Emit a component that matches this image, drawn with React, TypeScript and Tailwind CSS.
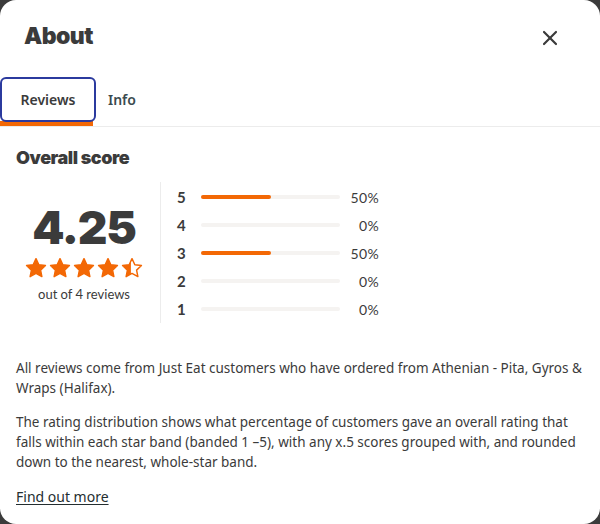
import { X } from "lucide-react";

const ratings = [
  { stars: 5, pct: 50 },
  { stars: 4, pct: 0 },
  { stars: 3, pct: 50 },
  { stars: 2, pct: 0 },
  { stars: 1, pct: 0 },
];

function Star({ fill = 1 }: { fill?: number }) {
  const id = `clip-${Math.round(fill * 100)}`;
  const d = "M12 1.8l3.1 6.6 7.2.9-5.3 5 1.4 7.1L12 17.9l-6.4 3.5 1.4-7.1-5.3-5 7.2-.9z";
  return (
    <svg viewBox="0 0 24 24" className="w-[22px] h-[22px]">
      <defs>
        <clipPath id={id}>
          <rect x="0" y="0" width={24 * fill} height="24" />
        </clipPath>
      </defs>
      <path d={d} fill="none" stroke="#f36805" strokeWidth="1.6" strokeLinejoin="round" />
      <path d={d} fill="#f36805" clipPath={`url(#${id})`} />
    </svg>
  );
}

export default function App() {
  return (
    <div className="w-[600px] h-[524px] bg-[#3b3b3b]">
      <div className="w-full h-full bg-white rounded-2xl overflow-hidden text-[#242e30]" style={{ fontFamily: "'Noto Sans', sans-serif" }}>
        {/* Header */}
        <div className="flex justify-between pl-6 pr-[38px] pt-[22px] h-[77px] items-start">
          <h2 className="text-[23px] font-black tracking-tight text-[#3b3b3b] leading-7" style={{ fontFamily: "Inter, sans-serif" }}>About</h2>
          <X className="w-6 h-6 text-[#3b3b3b] mt-[4px]" strokeWidth={2.2} />
        </div>

        {/* Tabs */}
        <div className="flex border-b border-[#ececec]">
          <div className="relative">
            <button className="h-[45px] w-[96px] rounded-md border-2 border-[#2b3a9e] text-[14px] font-semibold text-[#3b3b3b]">
              Reviews
            </button>
            <div className="h-[5px] w-[93px] bg-[#f36805] -mt-[1px]" />
          </div>
          <button className="h-[45px] px-3 text-[14px] font-semibold text-[#3b4b4f]">Info</button>
        </div>

        <div className="px-4 pt-[17px]">
          <h3 className="text-[18px] font-black text-[#3b3b3b] tracking-tight" style={{ fontFamily: "Inter, sans-serif" }}>Overall score</h3>

          {/* Score + distribution */}
          <div className="flex mt-[11px]">
            <div className="w-[144px] pr-2 flex flex-col items-center justify-center pt-[4px]">
              <div className="text-[46px] font-black leading-none text-[#3b3b3b] tracking-tight" style={{ fontFamily: "Inter, sans-serif" }}>4.25</div>
              <div className="flex gap-[2px] mt-[7px]">
                <Star />
                <Star />
                <Star />
                <Star />
                <Star fill={0.45} />
              </div>
              <div className="text-[13px] text-[#3b3b3b] mt-[6px]" style={{ fontFamily: "Lato, sans-serif" }}>out of 4 reviews</div>
            </div>
            <div className="w-px bg-[#ececec] h-[141px]" />
            <div className="flex flex-col pl-[16px] pt-[1px]" style={{ fontFamily: "Lato, sans-serif" }}>
              {ratings.map((r) => (
                <div key={r.stars} className="flex items-center h-[28px]">
                  <span className="w-[24px] text-[15px] font-bold text-[#3b3b3b]">{r.stars}</span>
                  <div className="w-[139px] h-[4px] rounded-full bg-[#f5f3f1]">
                    <div className="h-full rounded-full bg-[#f36805]" style={{ width: `${r.pct}%` }} />
                  </div>
                  <span className="w-[39px] text-right text-[14px] text-[#3b3b3b] tracking-wide">{r.pct}%</span>
                </div>
              ))}
            </div>
          </div>

          {/* Notes */}
          <div className="mt-[35px] text-[13.5px] leading-5 text-[#3b3b3b]">
            <p>All reviews come from Just Eat customers who have ordered from Athenian - Pita, Gyros &amp; Wraps (Halifax).</p>
            <p className="mt-[14px]">
              The rating distribution shows what percentage of customers gave an overall rating that falls within each star band (banded 1 –5), with any x.5 scores grouped with, and rounded down to the nearest, whole-star band.
            </p>
            <a className="inline-block mt-[15px] text-[14px] underline underline-offset-2 text-[#242e30]">Find out more</a>
          </div>
        </div>
      </div>
    </div>
  );
}
